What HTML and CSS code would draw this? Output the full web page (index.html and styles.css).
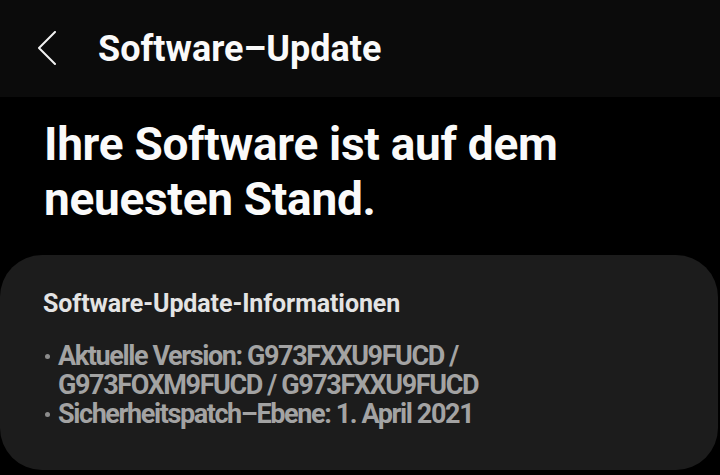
FILE: index.html
```html
<!DOCTYPE html>
<html lang="de">
<head>
    <meta charset="UTF-8">
    <meta name="viewport" content="width=device-width, initial-scale=1.0">
    <title>Software-Update</title>
    <link rel="stylesheet" href="styles.css">
</head>
<body>
    <header class="topbar">
        <button class="back" aria-label="Zurück">
            <svg width="20" height="36" viewBox="0 0 20 36">
                <polyline points="18,1 2,17 18,33" fill="none" stroke="#f2f2f2" stroke-width="2" stroke-linecap="round" stroke-linejoin="round"/>
            </svg>
        </button>
        <h1 class="title">Software–Update</h1>
    </header>

    <h2 class="status">Ihre Software ist auf dem<br>neuesten Stand.</h2>

    <section class="card">
        <h3 class="card-title">Software-Update-Informationen</h3>
        <ul class="info">
            <li>Aktuelle Version: G973FXXU9FUCD / G973FOXM9FUCD / G973FXXU9FUCD</li>
            <li>Sicherheitspatch–Ebene: 1. April 2021</li>
        </ul>
    </section>
</body>
</html>
```

FILE: styles.css
```css
body {
    font-family: Roboto, "Noto Sans", sans-serif;
    background-color: #000;
    color: #fafafa;
    margin: 0;
    width: 720px;
    height: 475px;
    overflow: hidden;
}
.topbar {
    height: 97px;
    background-color: #0b0b0b;
    display: flex;
    align-items: center;
    padding-left: 37px;
}
.back {
    background: none;
    border: none;
    padding: 0;
    width: 20px;
    height: 36px;
    display: flex;
}
.title {
    font-size: 36px;
    font-weight: 700;
    line-height: 40px;
    margin: 0 0 0 41px;
    letter-spacing: 0;
}
.status {
    font-size: 46px;
    font-weight: 700;
    line-height: 55px;
    margin: 20px 0 0 44px;
    letter-spacing: -0.3px;
}
.card {
    margin-top: 28px;
    width: 718px;
    box-sizing: border-box;
    background-color: #1c1c1c;
    border-radius: 42px;
    padding: 34px 20px 41px 43px;
}
.card-title {
    font-size: 25px;
    font-weight: 700;
    line-height: 30px;
    color: #e4e4e4;
    margin: 0 0 23px 0;
    letter-spacing: -0.1px;
}
.info {
    list-style: none;
    margin: 0;
    padding: 0;
    width: 460px;
}
.info li {
    position: relative;
    padding-left: 15px;
    font-size: 27px;
    line-height: 29px;
    font-weight: 700;
    color: #a3a3a3;
    letter-spacing: -1.4px;
}
.info li::before {
    content: "";
    position: absolute;
    left: 2px;
    top: 12px;
    width: 5px;
    height: 5px;
    border-radius: 50%;
    background-color: #8c8c8c;
}
```
